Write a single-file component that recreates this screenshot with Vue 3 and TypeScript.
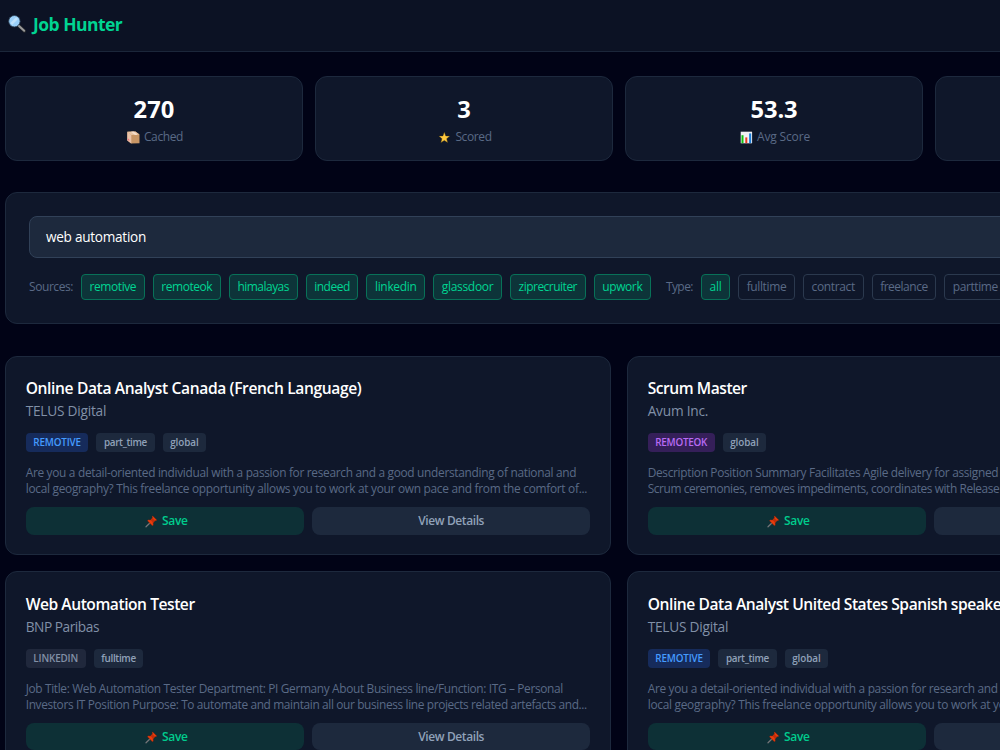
<script setup lang="ts">
import type { Directive } from 'vue'

interface Label { text: string; width: number }
interface Tag extends Label { tone: string }
interface Job { title: Label; company: Label; tags: Tag[]; lines: Label[] }

// Adjusts letter-spacing so that a label occupies the given measure.
const vFit: Directive<HTMLElement, number> = {
  mounted(el, { value }) {
    const count = (el.textContent ?? '').length
    const natural = el.getBoundingClientRect().width
    if (count > 0) el.style.letterSpacing = `${(value - natural) / count}px`
  },
}

const l = (text: string, width: number): Label => ({ text, width })
const t = (text: string, width: number, tone = 'plain'): Tag => ({ text, width, tone })

const stats = [
  { value: l('270', 41), label: l('Cached', 39.2), icon: 'box' },
  { value: l('3', 13.5), label: l('Scored', 36.2), icon: 'star' },
  { value: l('53.3', 47), label: l('Avg Score', 53), icon: 'chart' },
]

const sources: Label[] = [
  l('remotive', 46.5), l('remoteok', 50.9), l('himalayas', 51.6), l('indeed', 35.6),
  l('linkedin', 41.6), l('glassdoor', 51.6), l('ziprecruiter', 58.5), l('upwork', 40.1),
]
const types: Label[] = [
  l('all', 12), l('fulltime', 39.6), l('contract', 43.5), l('freelance', 47.5), l('parttime', 45),
]

const telusLines = [
  l('Are you a detail-oriented individual with a passion for research and a good understanding of national and', 550.5),
  l('local geography? This freelance opportunity allows you to work at your own pace and from the comfort of...', 561.5),
]
const telusTags = [t('REMOTIVE', 47.5, 'blue'), t('part_time', 43), t('global', 28.5)]

const jobs: Job[] = [
  { title: l('Online Data Analyst Canada (French Language)', 335.7), company: l('TELUS Digital', 80.5), tags: telusTags, lines: telusLines },
  {
    title: l('Scrum Master', 99.2), company: l('Avum Inc.', 60.5),
    tags: [t('REMOTEOK', 51.7, 'purple'), t('global', 28.5)],
    lines: [
      l('Description Position Summary Facilitates Agile delivery for assigned', 350.5),
      l('Scrum ceremonies, removes impediments, coordinates with Release', 351.5),
    ],
  },
  {
    title: l('Web Automation Tester', 169), company: l('BNP Paribas', 73.3),
    tags: [t('LINKEDIN', 44.8, 'gray'), t('fulltime', 34.5)],
    lines: [
      l('Job Title: Web Automation Tester Department: PI Germany About Business line/Function: ITG – Personal', 537.2),
      l('Investors IT Position Purpose: To automate and maintain all our business line projects related artefacts and...', 561.2),
    ],
  },
  { title: l('Online Data Analyst United States Spanish speaker', 360), company: l('TELUS Digital', 80.5), tags: telusTags, lines: telusLines },
]
</script>

<template>
  <div class="page">
    <header class="topbar">
      <svg class="logo" viewBox="0 0 18 18">
        <path d="M10.8 10.8l5.6 5.2" stroke="#25272c" stroke-width="3.4" stroke-linecap="round" />
        <path d="M11 11l5.2 4.8" stroke="#9b9b9b" stroke-width="2" stroke-linecap="round" />
        <circle cx="6.4" cy="6.2" r="5.7" fill="#9bd0fa" stroke="#2c4054" stroke-width=".8" />
        <path d="M2.6 7.8L8 2.3a4.400 4.400 0 0 1 2 1.600L4.400 9.800a4.400 4.400 0 0 1-1.800-2z" fill="#c0e2fc" />
      </svg>
      <h1><span v-fit="89.3">Job Hunter</span></h1>
    </header>

    <main>
      <section class="stats">
        <div v-for="s in stats" :key="s.label.text" class="stat">
          <div class="value"><span v-fit="s.value.width">{{ s.value.text }}</span></div>
          <div class="caption">
            <svg v-if="s.icon === 'box'" class="emoji" viewBox="0 0 13 13">
              <path d="M.3.8L8.400.500l4.100 3.100v8.600L4 12.600.300 9.400z" fill="#c89665" />
              <path d="M.3.8L8.400.500l4.100 3.100-8.200.500z" fill="#e8c5a3" />
              <path d="M.3.8l4 3.300V12.600l-4-3.200z" fill="#e9c2a8" />
              <path d="M4 .7l2.500-.1 4.200 3.100-2.700.2z" fill="#f5dfce" />
              <path d="M.8 7.200l1.500 1.200v1.700L.8 8.900z" fill="#ef7182" />
            </svg>
            <svg v-else-if="s.icon === 'star'" class="emoji" viewBox="0 0 13 13">
              <path d="M6.300 1.100l1.500 3.800 4.100.2-3.200 2.600 1.100 4-3.500-2.200-3.500 2.200 1.100-4L.8 5.100l4.100-.2z" fill="#ffc83d" stroke="#30280f" stroke-width=".4" />
            </svg>
            <svg v-else class="emoji" viewBox="0 0 13 13">
              <path d="M.7.7h11.400v11.600H.7z" fill="#f1eff2" />
              <path d="M1.500 4.200h2v7.900h-2z" fill="#13c20d" />
              <path d="M5.300 6.400h2v5.700h-2z" fill="#e83b22" />
              <path d="M9.100 2.400h2.100v9.700H9.100z" fill="#1d7fdb" />
            </svg>
            <span v-fit="s.label.width">{{ s.label.text }}</span>
          </div>
        </div>
        <div class="stat"></div>
      </section>

      <section class="search">
        <div class="field"><span v-fit="100">web automation</span></div>
        <div class="filters">
          <span class="name"><span v-fit="44">Sources:</span></span>
          <span v-for="c in sources" :key="c.text" class="chip on"><span v-fit="c.width">{{ c.text }}</span></span>
          <span class="name second"><span v-fit="27">Type:</span></span>
          <span v-for="(c, i) in types" :key="c.text" class="chip" :class="{ on: i === 0 }"><span v-fit="c.width">{{ c.text }}</span></span>
        </div>
      </section>

      <section class="jobs">
        <article v-for="j in jobs" :key="j.title.text" class="job">
          <h2><span v-fit="j.title.width">{{ j.title.text }}</span></h2>
          <p class="company"><span v-fit="j.company.width">{{ j.company.text }}</span></p>
          <div class="tags">
            <span v-for="g in j.tags" :key="g.text" class="tag" :class="g.tone"><span v-fit="g.width">{{ g.text }}</span></span>
          </div>
          <div class="description">
            <p v-for="line in j.lines" :key="line.text"><span v-fit="line.width">{{ line.text }}</span></p>
          </div>
          <div class="actions">
            <button class="save" type="button">
              <svg class="pin" viewBox="0 0 13 13">
                <path d="M4.900 8L1 11.800" stroke="#77777a" stroke-width="1.200" stroke-linecap="round" />
                <path d="M7.600.8l4.400 4.300-1 .8-1-.2-1.800 2 .2 2.200-.9 1L2.300 5.700l1-.9 2.200.1 1.900-1.900-.4-1.200z" fill="#e93c0b" stroke="#421b16" stroke-width=".4" />
                <path d="M7.300 3l2.700 2.700-1.800 2-2.700-2.800z" fill="#bd2d0b" />
              </svg>
              <span v-fit="25.6">Save</span>
            </button>
            <button class="view" type="button"><span v-fit="65.8">View Details</span></button>
          </div>
        </article>
      </section>
    </main>
  </div>
</template>

<style>
html, body { margin: 0; background: #010316; }
body { overflow: hidden; }
</style>

<style scoped>
.page {
  width: 1000px;
  height: 750px;
  overflow: hidden;
  background: #010316;
  color: #fff;
  font-family: "Open Sans", "Noto Sans", sans-serif;
}
span { white-space: nowrap; }
h1, h2, p { margin: 0; }
.topbar {
  box-sizing: border-box;
  height: 52px;
  display: flex;
  align-items: center;
  padding: 0 8px 3px;
  gap: 7px;
  background: #0c1224;
  border-bottom: 1px solid #1b263a;
}
.logo { width: 18px; height: 18px; }
h1 { font-size: 17.500px; line-height: 28px; font-weight: 700; color: #00d492; }
main { width: 1228px; padding: 24px 0 0 5px; }
.stats { display: grid; grid-template-columns: repeat(4, 1fr); gap: 12px; }
.stat, .search, .job {
  box-sizing: border-box;
  background: #0f172a;
  border: 1px solid #1d293d;
  border-radius: 12px;
}
.stat { height: 84.500px; padding-top: 16px; text-align: center; }
.value { font-size: 23.700px; font-weight: 700; line-height: 32px; }
.caption {
  display: flex;
  justify-content: center;
  align-items: center;
  gap: 4px;
  margin-top: 4px;
  padding-left: 2px;
  font-size: 12px;
  line-height: 16px;
  color: #5a6a86;
}
.emoji { width: 13px; height: 13px; }
.search { height: 132px; margin-top: 31.500px; padding: 23px; }
.field {
  box-sizing: border-box;
  height: 42px;
  padding: 0 16px;
  border: 1px solid #314158;
  border-radius: 8px;
  background: #1d293d;
  font-size: 13.600px;
  line-height: 40px;
}
.filters {
  display: flex;
  align-items: center;
  gap: 8px;
  margin-top: 15.500px;
  font-size: 12px;
  line-height: 16px;
}
.name { color: #5a6a86; }
.second { margin-left: 7px; }
.chip {
  box-sizing: border-box;
  height: 26px;
  padding: 4px 7.600px;
  border: 1px solid #2b394e;
  border-radius: 4px;
  color: #5a6a86;
}
.chip.on { color: #00d492; background: #0d3439; border-color: #087158; }
.jobs {
  display: grid;
  grid-template-columns: 1fr 1fr;
  gap: 16px;
  margin-top: 31.500px;
}
.job { height: 199.670px; padding: 19.500px 19.700px; min-width: 0; }
h2 { font-size: 15.600px; font-weight: 600; line-height: 24px; }
.company { margin-top: 1px; font-size: 13.700px; line-height: 20px; color: #8190a7; }
.tags { display: flex; gap: 8px; margin-top: 12.300px; font-size: 9.900px; line-height: 18.500px; font-weight: 600; }
.tag { height: 19px; padding: 0 7.600px; border-radius: 4px; background: #1d293d; color: #90a1b9; }
.tag.blue { background: #162b5b; color: #459cff; }
.tag.purple { background: #351f59; color: #b96bf5; }
.tag.gray { background: #20283c; color: #8290a6; }
.description { margin-top: 12px; color: #5a6a86; font-size: 11.900px; line-height: 16px; }
.actions { display: grid; grid-template-columns: 1fr 1fr; gap: 8px; margin-top: 11px; }
button {
  height: 27.300px;
  border: 0;
  border-radius: 8px;
  padding: 1px 0 0;
  display: flex;
  align-items: center;
  justify-content: center;
  gap: 4px;
  font: 600 12px/16px "Open Sans", "Noto Sans", sans-serif;
}
.save { padding-left: 3px; background: #0d3036; color: #00cc8d; }
.view { background: #1d293d; color: #90a1b9; }
.pin { width: 13px; height: 13px; }
</style>
